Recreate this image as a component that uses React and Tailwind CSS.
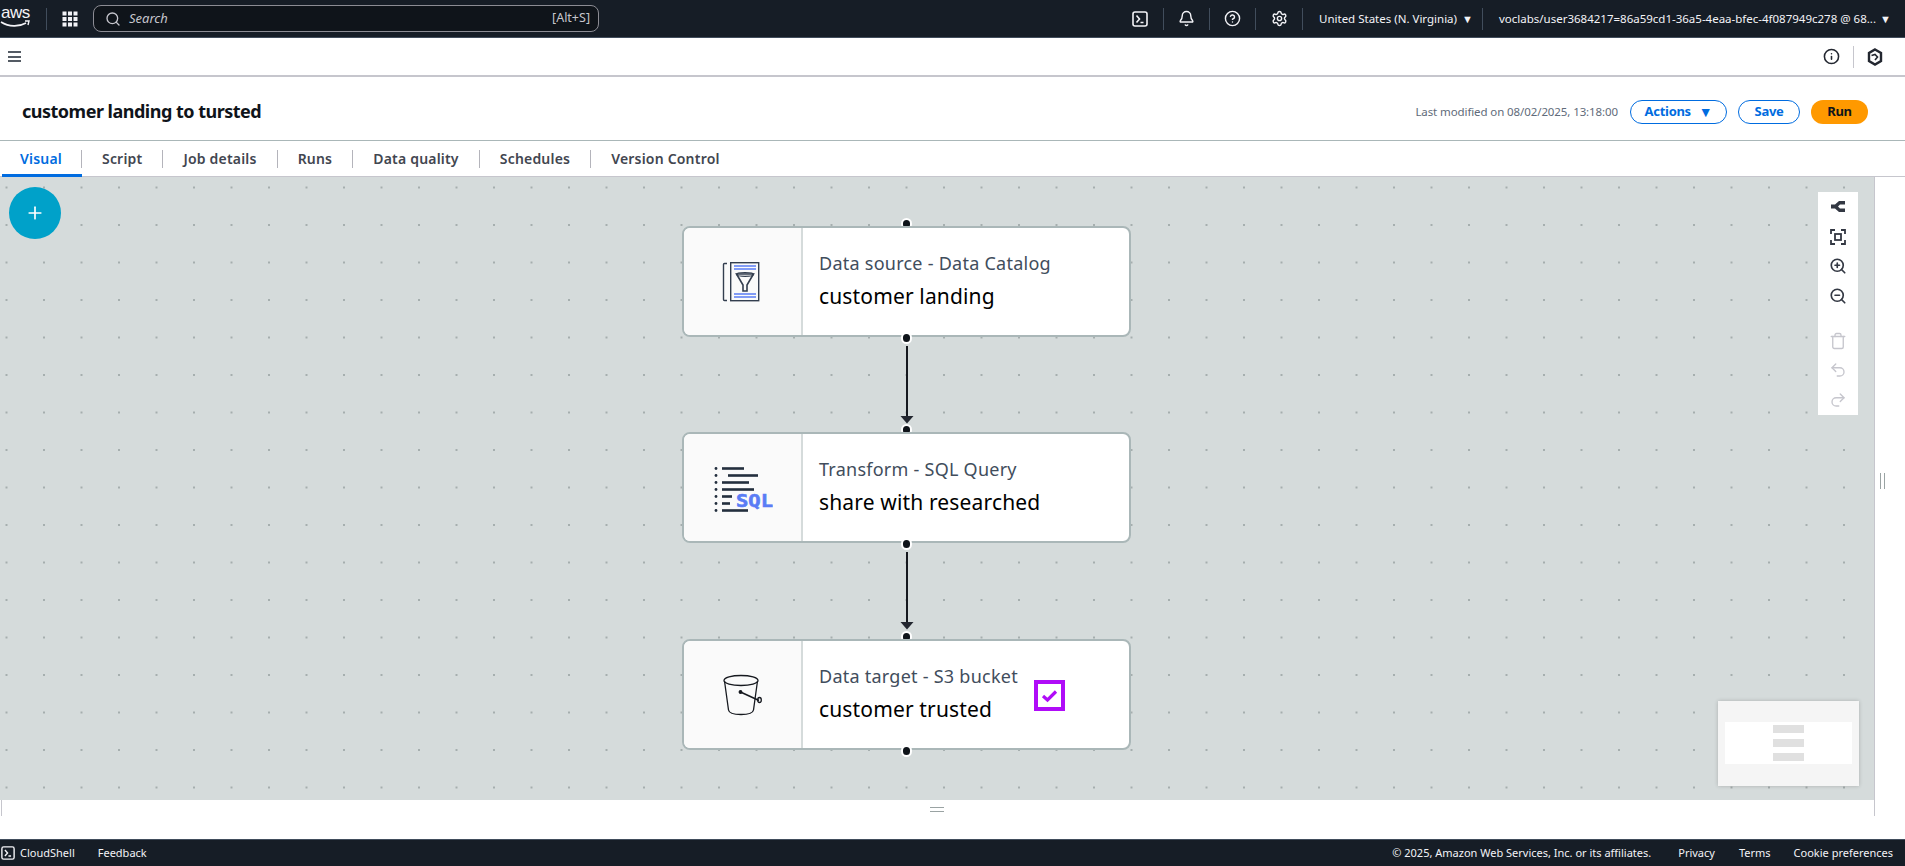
import React from 'react';
import { Bell, CircleHelp, Settings, Search, Info, ZoomIn, ZoomOut, Trash, Undo2, Redo2, Plus } from 'lucide-react';

const UI_FONT = "font-['Noto_Sans',sans-serif]";

const TerminalIcon = ({ size = 16 }) => (
  <svg width={size} height={size} viewBox="0 0 16 16" fill="none" stroke="currentColor" strokeWidth="1.6">
    <rect x="1" y="1" width="14" height="14" rx="2" />
    <path d="M4.5 4.5 7.5 8l-3 3.5M8.5 11.5h3" />
  </svg>
);

const TopBar = () => (
  <header className="h-[38px] shrink-0 flex items-center bg-[#161d26] border-b border-[#414d5c] text-[#f3f3f7] text-[11.5px]">
    <div className="w-[46px] relative h-full shrink-0">
      <span className="absolute left-[1px] top-[3px] text-[17px] leading-[20px] font-['Liberation_Sans',sans-serif] tracking-[-0.5px]">aws</span>
      <svg className="absolute left-0 top-[20px]" width="31" height="9" viewBox="0 0 31 9" fill="none">
        <path d="M1 2c8 5 18 5 25 1" stroke="currentColor" strokeWidth="1.6" />
        <path d="M25 1h4l-1 4" stroke="currentColor" strokeWidth="1.4" />
      </svg>
    </div>
    <div className="w-px h-[22px] bg-[#414d5c]" />
    <div className="w-[46px] flex justify-center">
      <svg width="16" height="16" viewBox="0 0 16 16" fill="currentColor">
        <rect x="0.5" y="0.5" width="4" height="4" /><rect x="6" y="0.5" width="4" height="4" /><rect x="11.5" y="0.5" width="4" height="4" />
        <rect x="0.5" y="6" width="4" height="4" /><rect x="6" y="6" width="4" height="4" /><rect x="11.5" y="6" width="4" height="4" />
        <rect x="0.5" y="11.5" width="4" height="4" /><rect x="6" y="11.5" width="4" height="4" /><rect x="11.5" y="11.5" width="4" height="4" />
      </svg>
    </div>
    <div className="w-[506px] h-[27px] flex items-center bg-[#0f141a] border border-[#8c8c94] rounded-lg pl-[11px] pr-[8px] text-[#c6c6cd]">
      <Search size={16} strokeWidth={2} />
      <span className="italic ml-[8px] text-[13px]">Search</span>
      <span className="ml-auto text-[12.5px]">[Alt+S]</span>
    </div>

    <div className="flex-1 flex justify-end pr-[15px]"><TerminalIcon /></div>
    <div className="flex items-center h-full shrink-0">
      <div className="w-px h-[22px] bg-[#414d5c]" />
      <div className="w-[45px] flex justify-center"><Bell size={17} strokeWidth={2} /></div>
      <div className="w-px h-[22px] bg-[#414d5c]" />
      <div className="w-[45px] flex justify-center"><CircleHelp size={17} strokeWidth={2} /></div>
      <div className="w-px h-[22px] bg-[#414d5c]" />
      <div className="w-[46px] flex justify-center"><Settings size={17} strokeWidth={2} /></div>
      <div className="w-px h-[22px] bg-[#414d5c]" />
      <div className="w-[179px] flex items-center pl-[16px] whitespace-nowrap">
        United States (N. Virginia)
        <span className="ml-[5px] text-[11px] leading-none">▼</span>
      </div>
      <div className="w-px h-[22px] bg-[#414d5c]" />
      <div className="w-[422px] flex items-center pl-[16px] whitespace-nowrap">
        voclabs/user3684217=86a59cd1-36a5-4eaa-bfec-4f087949c278 @ 68...
        <span className="ml-[4px] text-[11px] leading-none">▼</span>
      </div>
    </div>
  </header>
);

const SubBar = () => (
  <div className="h-[39px] shrink-0 flex items-center bg-white border-b-2 border-[#c6c6cd] pl-[8px] pr-[22px]">
    <div className="flex flex-col gap-[2.5px]">
      <span className="block w-[13px] h-[2px] bg-[#545b64]" />
      <span className="block w-[13px] h-[2px] bg-[#545b64]" />
      <span className="block w-[13px] h-[2px] bg-[#545b64]" />
    </div>
    <Info size={17} strokeWidth={2.2} className="ml-auto text-[#232730]" />
    <div className="w-px h-[22px] bg-[#c6c6cd] mx-[13px]" />
    <svg width="16" height="18" viewBox="0 0 16 18" fill="none" stroke="#232730" strokeWidth="2.4">
      <path d="M8 1.5 14 5v8l-6 3.5L2 13V5z" />
      <path d="M4.500 7.500 8 6.500l2.500 2.500L8 12" strokeWidth="1.6" />
    </svg>
  </div>
);

const TitleBar = () => (
  <div className="h-[64px] shrink-0 flex items-center bg-white pt-[6px] pl-[22px] pr-[37px] border-b border-[#aab7b8]">
    <h1 className="text-[18px] font-bold text-[#0f141a] tracking-[-0.5px]">customer landing to tursted</h1>
    <span className="ml-auto text-[11.5px] text-[#5f6b7a] tracking-[-0.1px]">Last modified on 08/02/2025, 13:18:00</span>
    <button className="ml-[12px] w-[97px] h-[24px] flex items-center justify-center gap-[8px] border border-[#006ce0] rounded-full text-[#006ce0] text-[13px] font-bold tracking-[-0.3px]">
      Actions <span className="text-[14px] leading-none">▼</span>
    </button>
    <button className="ml-[11px] w-[62px] h-[24px] flex items-center justify-center border border-[#006ce0] rounded-full text-[#006ce0] text-[13px] font-bold tracking-[-0.3px]">Save</button>
    <button className="ml-[11px] w-[57px] h-[24px] flex items-center justify-center bg-[#ff9900] rounded-full text-[#0f141a] text-[13px] font-bold tracking-[-0.3px]">Run</button>
  </div>
);

const tabs = ['Visual', 'Script', 'Job details', 'Runs', 'Data quality', 'Schedules', 'Version Control'];

const TabBar = () => (
  <div className="h-[36px] shrink-0 flex items-center bg-white border-b border-[#c6c6cd] pl-[2px]">
    {tabs.map((t, i) => (
      <div key={t} className="h-full relative flex items-center">
        <span className={`text-[14px] font-semibold tracking-[0.2px] whitespace-nowrap pb-[1px] ${i === 0 ? 'pl-[18px] pr-[19px] text-[#006ce0]' : 'px-[20px] text-[#424650]'}`}>{t}</span>
        {i < tabs.length - 1 && <div className="w-px h-[18px] bg-[#b4b4bb]" />}
        {i === 0 && <div className="absolute left-0 right-0 bottom-[-1px] h-[3px] bg-[#006ce0]" />}
      </div>
    ))}
  </div>
);

const CatalogIcon = () => (
  <svg width="42" height="42" viewBox="0 0 42 42" fill="none" stroke="#333e4f" strokeWidth="1.4">
    <path d="M5 2.5H2.5a1 1 0 0 0-1 1v35a1 1 0 0 0 1 1H5" />
    <rect x="8.7" y="1.7" width="28" height="38" />
    <path d="M12 5h22M12 8h22M12 33h22M12 36h22" stroke="#5a7cf5" strokeWidth="1.5" />
    <path d="M14.5 13h17l-6.5 11v6h-4v-6z" strokeWidth="1.6" />
    <ellipse cx="23" cy="13.5" rx="8.5" ry="1.8" strokeWidth="1.2" />
  </svg>
);

const SqlIcon = () => (
  <div className="w-[60px] h-[48px]">
    <svg width="60" height="48" viewBox="0 0 60 48">
      <g fill="#232f3e">
        <circle cx="3" cy="4.500" r="1.400" /><circle cx="3" cy="11.500" r="1.400" /><circle cx="3" cy="18.500" r="1.400" /><circle cx="3" cy="25.500" r="1.400" />
        <circle cx="3" cy="32.500" r="1.400" /><circle cx="3" cy="39.500" r="1.400" /><circle cx="3" cy="46.500" r="1.400" />
        <rect x="9" y="3.200" width="22" height="2.600" /><rect x="15" y="10.200" width="30" height="2.600" /><rect x="9" y="17.200" width="27" height="2.600" />
        <rect x="9" y="24.200" width="32" height="2.600" /><rect x="9" y="31.200" width="10" height="2.600" /><rect x="9" y="38.200" width="8" height="2.600" />
        <rect x="9" y="45.200" width="26" height="2.600" />
      </g>
      <text x="23" y="42.500" fill="#5a7cf5" stroke="#5a7cf5" strokeWidth="0.6" fontSize="18" fontWeight="700" fontFamily="'DejaVu Sans Mono', monospace" textLength="37" lengthAdjust="spacingAndGlyphs">SQL</text>
    </svg>
  </div>
);

const BucketIcon = () => (
  <svg width="40" height="42" viewBox="0 0 40 42" fill="none" stroke="#16191f" strokeWidth="1.3">
    <ellipse cx="18" cy="6.5" rx="17" ry="5" />
    <path d="M1.5 7 5.5 36c.5 3 6 4.500 12.500 4.500s12-1.500 12.500-4.500L34.500 7" />
    <path d="M17.500 18 36 26.500" strokeWidth="1.5" />
    <circle cx="17.500" cy="18" r="1.300" fill="#16191f" />
    <ellipse cx="36.500" cy="26" rx="1.800" ry="2.500" />
  </svg>
);

const Port = ({ className }) => (
  <div className={`absolute left-[219px] w-[11px] h-[12px] rounded-full bg-[#0f141a] border-2 border-white ${className}`} />
);

const Node = ({ top, icon, label, name, checked }) => (
  <div className={`absolute left-[682px] w-[449px] h-[111px] ${top}`}>
    <Port className="top-[-8px]" />
    <div className="relative h-full flex bg-white border-2 border-[#aab7b8] rounded-lg overflow-hidden">
      <div className="w-[119px] shrink-0 flex items-center justify-center bg-[#fafafa] border-r-2 border-[#d5dbdb]">{icon}</div>
      <div className={`${UI_FONT} pl-[16px] pb-[3px] flex flex-col justify-center`}>
        <div className="text-[18px] leading-[26px] text-[#414d5c] tracking-[0.25px]">{label}</div>
        <div className="text-[21px] leading-[30px] mt-[5px] text-black tracking-[0.15px]">{name}</div>
      </div>
      {checked && (
        <div className="ml-[16px] mt-[39px] w-[31px] h-[31px] flex items-center justify-center border-[4px] border-[#b00cf8]">
          <svg width="17" height="14" viewBox="0 0 17 14" fill="none" stroke="#b00cf8" strokeWidth="3.2"><path d="M2 7l4.500 4L15 2.500" /></svg>
        </div>
      )}
    </div>
    <Port className="bottom-[-7px]" />
  </div>
);

const Edge = ({ top }) => (
  <svg className={`absolute left-[899px] ${top}`} width="16" height="78" viewBox="0 0 16 78">
    <path d="M8 0v70" stroke="#16191f" strokeWidth="2" />
    <path d="M1.500 70h13L8 77.500z" fill="#232730" />
  </svg>
);

const ToolBtn = ({ children, className = '' }) => (
  <div className={`h-[30px] flex items-center justify-center ${className}`}>{children}</div>
);

const Canvas = () => (
  <div className="relative h-[623px] w-[1875px] border-r border-[#c6c6cd] overflow-hidden bg-[#d5dbdb] bg-[radial-gradient(circle,#a5aeae_1px,transparent_1.2px)] bg-[size:37.5px_37.5px] bg-[position:-12.25px_-8.25px]">
    <button className="absolute left-[9px] top-[10px] w-[52px] h-[52px] rounded-full bg-[#00a1c9] flex items-center justify-center text-white">
      <Plus size={20} strokeWidth={2} />
    </button>

    <Edge top="top-[169px]" />
    <Edge top="top-[375px]" />
    <Node top="top-[49px]" icon={<CatalogIcon />} label="Data source - Data Catalog" name="customer landing" />
    <Node top="top-[255px]" icon={<SqlIcon />} label="Transform - SQL Query" name="share with researched" />
    <Node top="top-[462px]" icon={<BucketIcon />} label="Data target - S3 bucket" name="customer trusted" checked />

    <div className="absolute left-[1818px] top-[15px] w-[40px] h-[223px] bg-white flex flex-col text-[#333843]">
      <ToolBtn>
        <svg width="14" height="13" viewBox="0 0 14 13" fill="currentColor">
          <path d="M0 4.500h4L8 1h6v3.500H9L7 6.500l2 2h5V12H8L4 8.500H0z" />
        </svg>
      </ToolBtn>
      <ToolBtn>
        <svg width="16" height="16" viewBox="0 0 16 16" fill="none" stroke="currentColor" strokeWidth="1.800">
          <path d="M1 5V1h4M11 1h4v4M15 11v4h-4M5 15H1v-4" />
          <rect x="5" y="5" width="6" height="6" />
        </svg>
      </ToolBtn>
      <ToolBtn><ZoomIn size={18} strokeWidth={2.200} /></ToolBtn>
      <ToolBtn><ZoomOut size={18} strokeWidth={2.200} /></ToolBtn>
      <div className="h-[15px]" />
      <ToolBtn className="text-[#c6c6cd]"><Trash size={18} strokeWidth={1.800} /></ToolBtn>
      <ToolBtn className="text-[#c6c6cd]"><Undo2 size={18} strokeWidth={1.800} /></ToolBtn>
      <ToolBtn className="text-[#c6c6cd]"><Redo2 size={18} strokeWidth={1.800} /></ToolBtn>
    </div>

    <div className="absolute left-[1718px] top-[524px] w-[141px] h-[85px] bg-[#f5f5f5] shadow-[0_0_4px_rgba(0,0,0,0.2)] pt-[21px] px-[7px]">
      <div className="h-[42px] bg-white flex flex-col items-center gap-[6px] pt-[3px]">
        <div className="w-[31px] h-[8px] bg-[#e0e0e0]" />
        <div className="w-[31px] h-[8px] bg-[#e0e0e0]" />
        <div className="w-[31px] h-[8px] bg-[#e0e0e0]" />
      </div>
    </div>
  </div>
);

const Footer = () => (
  <footer className="h-[27px] shrink-0 flex items-center bg-[#161d26] border-t border-[#414d5c] text-[#f3f3f7] text-[11px] pl-[1px] pr-[12px]">
    <TerminalIcon size={14} />
    <span className="ml-[5px]">CloudShell</span>
    <span className="ml-[23px]">Feedback</span>
    <span className="ml-auto">© 2025, Amazon Web Services, Inc. or its affiliates.</span>
    <span className="ml-[27px]">Privacy</span>
    <span className="ml-[24px]">Terms</span>
    <span className="ml-[23px]">Cookie preferences</span>
  </footer>
);

export default function App() {
  return (
    <div className={`${UI_FONT} h-screen w-full overflow-hidden flex flex-col bg-white`}>
      <TopBar />
      <SubBar />
      <TitleBar />
      <TabBar />
      <div className="flex-1 relative">
        <Canvas />
        {/* split handles */}
        <div className="absolute left-[1880px] top-[296px] w-[5px] h-[16px] border-x border-[#9aa3a3]" />
        <div className="absolute left-[1874px] top-[623px] w-px h-[16px] bg-[#c6c6cd]" />
        <div className="absolute left-[1px] top-[623px] w-px h-[16px] bg-[#c6c6cd]" />
        <div className="absolute left-[930px] top-[630px] w-[14px] h-[5px] border-y border-[#9aa3a3]" />
      </div>
      <Footer />
    </div>
  );
}
